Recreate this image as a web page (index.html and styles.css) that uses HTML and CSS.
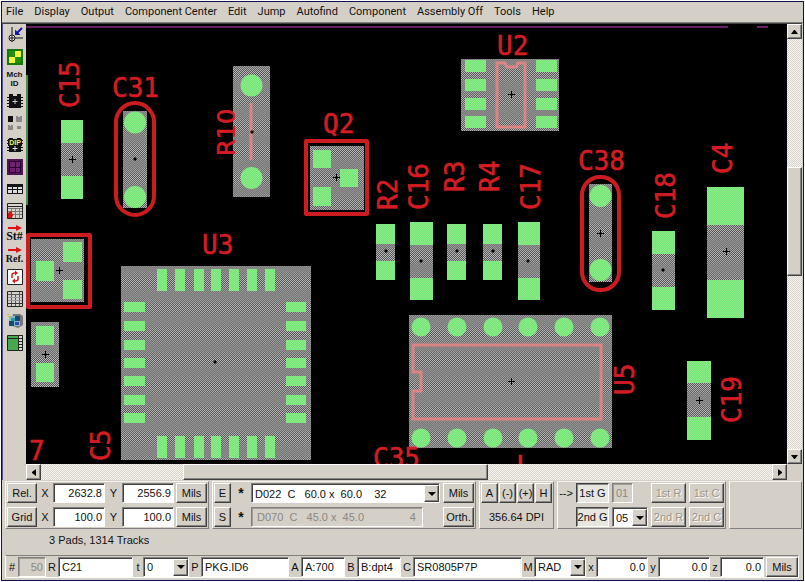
FILE: index.html
```html
<!DOCTYPE html>
<html lang="en">
<head>
<meta charset="utf-8">
<title>Board Viewer</title>
<link rel="stylesheet" href="styles.css">
</head>
<body>
<div class="window">
  <nav class="menu">
    <button>File</button><button>Display</button><button>Output</button><button>Component Center</button><button>Edit</button><button>Jump</button><button>Autofind</button><button>Component</button><button>Assembly Off</button><button>Tools</button><button>Help</button>
  </nav>

  <main class="work">
    <div class="tools">
      <button aria-label="Origin"><svg viewBox="0 0 16 16"><path d="M5 0v15M2 11h14" stroke="#111" fill="none"/><circle cx="5" cy="11" r="3" fill="#eee" stroke="#111"/><path d="M5 9v4M3 11h4" stroke="#111"/><path d="M15 1l-5 5" stroke="#1414b4" stroke-width="2"/><path d="M8 2.500v5.500h5.500z" fill="#1414b4"/></svg></button>
      <button aria-label="Layers"><svg viewBox="0 0 16 16"><path fill="#14780a" d="M0 0h16v16H0z"/><path fill="#f4f43c" d="M8 2h6v6H8zM2 8h6v6H2z"/><path fill="#209010" d="M2 2h6v6H2zM8 8h6v6H8z"/></svg></button>
      <button class="mch">Mch<br>ID</button>
      <button aria-label="Chip"><svg viewBox="0 0 16 16"><path fill="#111" d="M2 1h4v2h4V1h4v14H2z"/><path d="M0 4.500h16M0 7.500h16M0 10.500h16M0 13.500h16" stroke="#111"/><path d="M8 6v5M5.500 8.500h5" stroke="#ccc"/></svg></button>
      <button aria-label="Parts"><svg viewBox="0 0 16 16"><path fill="#111" d="M1 1h5v6H1z"/><path fill="#8a8a88" d="M9 1h2v1h2V1h2v6H9zM1 10h2v1h1v-1h2v5H1zM10 11h4v3h-4z"/></svg></button>
      <button aria-label="DIP"><svg viewBox="0 0 16 16"><path fill="#111" d="M2 1h4v1h4V1h4v14H2z"/><path d="M0 3.500h16M0 6.500h16M0 10.500h16M0 13.500h16" stroke="#111"/><path fill="#111" d="M1 2h14v7H1z"/><text x="8" y="8" class="dip">DIP</text><path d="M8 9v5M5.500 11.500h5" stroke="#ddd"/></svg></button>
      <button aria-label="Grid"><svg viewBox="0 0 16 16"><path fill="#581058" d="M0 0h16v16H0z"/><path d="M2.500 2.500h11v11h-11zM8.500 3v10M3 8.500h10" fill="#702070" stroke="#24002c"/></svg></button>
      <button aria-label="Row"><svg viewBox="0 0 16 16"><path fill="#151515" d="M0 3h16v10H0z"/><path fill="#ddd" d="M1 6h4v2H1zM6 6h4v2H6zM11 6h4v2h-4zM1 9h4v3H1zM6 9h4v3H6zM11 9h4v3h-4z"/></svg></button>
      <button aria-label="Edit table"><svg viewBox="0 0 16 16"><path fill="#d8d6d0" stroke="#222" d="M.5 .5h15v15H.5z"/><path stroke="#777" fill="none" d="M1 5.500h14M1 8.500h14M1 11.500h14M4.500 5v10M8.500 5v10M12.500 5v10"/><path stroke="#222" d="M1 3.500h14"/><path fill="#d01818" d="M1 10l3-2 2 4-1 3H1z"/></svg></button>
      <button class="serif"><svg class="arrow" viewBox="0 0 14 6"><path fill="#dc1418" d="M0 2h8V0l6 3-6 3V4H0z"/></svg>St#</button>
      <button class="serif small"><svg class="arrow" viewBox="0 0 14 6"><path fill="#dc1418" d="M0 2h8V0l6 3-6 3V4H0z"/></svg>Ref.</button>
      <button aria-label="Refresh"><svg viewBox="0 0 16 16"><path fill="#fff" stroke="#222" d="M.5 .5h15v15H.5z"/><path fill="none" stroke="#d01818" stroke-width="1.500" d="M5 9V6q0-2 3-2M11 7v3q0 2-3 2"/><path fill="#d01818" d="M8 1.500v5L11 4zM8 9.500v5L5 12z"/></svg></button>
      <button aria-label="Table"><svg viewBox="0 0 16 16"><path fill="#d4d2cc" stroke="#222" d="M.5 .5h15v15H.5z"/><path stroke="#555" fill="none" d="M1 3.500h14M4.500 1v14M8.500 4v11M12.500 1v14"/><path stroke="#999" d="M1 6.500h14M1 9.500h14"/><path stroke="#333" d="M1 12.500h14"/></svg></button>
      <button aria-label="Model"><svg viewBox="0 0 16 16"><path fill="#777" d="M3 12l8 3 5-3V3l-3-2H6z"/><path fill="#88b8c4" d="M2 3h11v10H2z"/><path fill="#184878" d="M2 8h5v5H2zM8 3h5v5H8z"/><path fill="#20a0a0" d="M4 5h4v3H4z"/><path fill="#2848b8" d="M8 9h4v3H8z"/><path fill="#c8c828" d="M0 1h3v1H0zM1 3h1v1H1z"/></svg></button>
      <button aria-label="Panel"><svg viewBox="0 0 16 16"><path fill="#48a850" stroke="#222" d="M.5 .5h15v15H.5z"/><path fill="#d4e0d0" stroke="#222" d="M11.500 .5h4v15h-4z"/><path stroke="#222" d="M1 3.500h14M12 6.500h3M12 9.500h3M12 12.500h3"/></svg></button>
    </div>

    <div class="view">
      <svg class="board" role="img" aria-label="Board layout">
        <defs>
          <pattern id="checker" width="2" height="2" patternUnits="userSpaceOnUse"><path fill="#484848" d="M0 0h2v2H0z"/><path fill="#c4c4c4" d="M0 0h1v1H0zM1 1h1v1H1z"/></pattern>
          <pattern id="green" width="2" height="2" patternUnits="userSpaceOnUse"><path fill="#74e474" d="M0 0h2v2H0z"/><path fill="#8cec8c" d="M0 0h1v1H0zM1 1h1v1H1z"/></pattern>
          <linearGradient id="band" gradientUnits="userSpaceOnUse" x1="0" y1="308" x2="0" y2="321" spreadMethod="reflect"><stop offset="0" stop-color="#848484" stop-opacity=".1"/><stop offset="1" stop-color="#848484" stop-opacity=".9"/></linearGradient>
          <path id="cross" d="M-3.500 0h7M0-3.500v7M-1 0h2" stroke="#000" fill="none"/>
          <path id="dot" d="M-2 0L0-2 2 0 0 2z" fill="#000"/>
          <path id="bodies" d="M61 120h22v79H61zM123 111h24v97h-24zM233 66h37v131h-37zM310 146h54v64h-54zM461 59h98v72h-98zM376 224h19v56h-19zM410 222h23v78h-23zM447 224h19v56h-19zM483 224h19v56h-19zM518 222h22v78h-22zM589 184h23v98h-23zM652 231h23v79h-23zM707 187h37v131h-37zM687 361h24v79h-24zM31 239h53v63H31zM31 322h28v65H31zM121 266h190v194H121zM409 315h203v133H409z"/>
        </defs>
        <g transform="translate(-26 -24)">
          <path class="sheet" d="M26 27h702M757 27h11"/>
          <path d="M26 75h2v130h-2z" fill="url(#green)" opacity=".6"/>
          <g shape-rendering="crispEdges">
            <use href="#bodies" fill="url(#checker)"/>
            <use href="#bodies" fill="url(#band)"/>
          </g>
          <g class="outline">
            <rect x="116" y="103" width="38" height="112" rx="19"/>
            <rect x="582" y="177" width="37" height="113" rx="18"/>
            <rect x="306" y="141" width="61" height="73"/>
            <rect x="28" y="235" width="62" height="72"/>
          </g>
          <g class="silk">
            <path d="M251 103v57"/>
            <path d="M497 127V63h8l2 4h9l2-4h7v64z"/>
            <path d="M413 345h188v74H413v-28h8v-19h-8z"/>
          </g>
          <g fill="url(#green)">
            <g shape-rendering="crispEdges">
              <path d="M61 120h22v23H61zM61 176h22v23H61z"/>
              <path d="M313 150h18v18h-18zM340 169h18v18h-18zM313 187h18v19h-18z"/>
              <path d="M465 60h21v12h-21zM465 79h21v12h-21zM465 98h21v12h-21zM465 116h21v12h-21zM536 60h21v12h-21zM536 79h21v12h-21zM536 98h21v12h-21zM536 116h21v12h-21z"/>
              <path d="M376 224h19v20h-19zM376 261h19v19h-19zM447 224h19v20h-19zM447 261h19v19h-19zM483 224h19v20h-19zM483 261h19v19h-19z"/>
              <path d="M410 222h23v23h-23zM410 278h23v22h-23zM518 222h22v23h-22zM518 278h22v22h-22z"/>
              <path d="M652 231h23v23h-23zM652 287h23v23h-23zM707 187h37v38h-37zM707 280h37v38h-37zM687 361h24v22h-24zM687 417h24v23h-24z"/>
              <path d="M63 242h19v20H63zM36 261h18v20H36zM63 280h19v19H63zM36 326h18v19H36zM36 363h18v19H36z"/>
              <path d="M157 269h10v22h-10zM175 269h10v22h-10zM194 269h10v22h-10zM211 269h10v22h-10zM229 269h10v22h-10zM247 269h10v22h-10zM265 269h10v22h-10z"/>
              <path d="M157 436h10v22h-10zM175 436h10v22h-10zM194 436h10v22h-10zM211 436h10v22h-10zM229 436h10v22h-10zM247 436h10v22h-10zM265 436h10v22h-10z"/>
              <path d="M124 302h21v10h-21zM124 321h21v10h-21zM124 340h21v10h-21zM124 358h21v10h-21zM124 376h21v10h-21zM124 395h21v10h-21zM124 413h21v10h-21z"/>
              <path d="M286 302h20v10h-20zM286 321h20v10h-20zM286 340h20v10h-20zM286 358h20v10h-20zM286 376h20v10h-20zM286 395h20v10h-20zM286 413h20v10h-20z"/>
            </g>
            <circle cx="135" cy="122.500" r="11"/><circle cx="135" cy="197" r="11"/>
            <circle cx="251.500" cy="85.500" r="11"/><circle cx="251.500" cy="178" r="11"/>
            <circle cx="600.500" cy="196" r="11"/><circle cx="600.500" cy="270" r="11"/>
            <circle cx="421" cy="327" r="9.500"/><circle cx="457" cy="327" r="9.500"/><circle cx="493" cy="327" r="9.500"/><circle cx="528" cy="327" r="9.500"/><circle cx="564" cy="327" r="9.500"/><circle cx="600" cy="327" r="9.500"/>
            <circle cx="421" cy="438" r="9.500"/><circle cx="457" cy="438" r="9.500"/><circle cx="493" cy="438" r="9.500"/><circle cx="528" cy="438" r="9.500"/><circle cx="564" cy="438" r="9.500"/><circle cx="600" cy="438" r="9.500"/>
          </g>
          <use href="#cross" x="72.500" y="159.500"/><use href="#dot" x="135" y="159"/><use href="#dot" x="252" y="132"/>
          <use href="#cross" x="336.500" y="177.500"/><use href="#cross" x="511.500" y="94.500"/>
          <use href="#dot" x="386" y="251"/><use href="#dot" x="421" y="261"/><use href="#dot" x="457" y="251"/><use href="#dot" x="493" y="251"/><use href="#dot" x="528" y="261"/>
          <use href="#cross" x="600.500" y="233.500"/><use href="#dot" x="663" y="270"/><use href="#cross" x="726.500" y="251.500"/><use href="#cross" x="699.500" y="400.500"/>
          <use href="#cross" x="59.500" y="270.500"/><use href="#cross" x="45.500" y="354.500"/><use href="#dot" x="215" y="362"/><use href="#cross" x="511.500" y="381.500"/>
          <g class="ref">
            <text x="112" y="97">C31</text><text x="323" y="133">Q2</text><text x="497" y="55">U2</text><text x="578" y="170">C38</text><text x="202" y="254">U3</text><text x="29" y="460">7</text><text x="373" y="467">C35</text>
            <text transform="translate(79 108) rotate(-90)">C15</text>
            <text class="wide" transform="translate(235 156) rotate(-90)">R10</text>
            <text transform="translate(397 210) rotate(-90)">R2</text>
            <text transform="translate(428 210) rotate(-90)">C16</text>
            <text transform="translate(464 192) rotate(-90)">R3</text>
            <text transform="translate(499 192) rotate(-90)">R4</text>
            <text transform="translate(540 210) rotate(-90)">C17</text>
            <text transform="translate(675 219) rotate(-90)">C18</text>
            <text transform="translate(732 174) rotate(-90)">C4</text>
            <text transform="translate(741 423) rotate(-90)">C19</text>
            <text transform="translate(634 395) rotate(-90)">U5</text>
            <text transform="translate(110 461) rotate(-90)">C5</text>
            <path d="M519 455h3v12h-3z"/>
          </g>
        </g>
      </svg>
    </div>

    <div class="scroll vertical">
      <button aria-label="Scroll up"><svg viewBox="0 0 7 4"><path d="M0 4h7L4 0H3z"/></svg></button>
      <span class="before"></span><span class="thumb"></span><span class="after"></span>
      <button aria-label="Scroll down"><svg viewBox="0 0 7 4"><path d="M0 0h7L4 4H3z"/></svg></button>
    </div>
    <div class="scroll horizontal">
      <button aria-label="Scroll left"><svg class="side" viewBox="0 0 4 7"><path d="M4 0v7L0 4V3z"/></svg></button>
      <span class="before"></span><span class="thumb"></span><span class="after"></span>
      <button aria-label="Scroll right"><svg class="side" viewBox="0 0 4 7"><path d="M0 0v7l4-3V3z"/></svg></button>
    </div>
  </main>

  <footer class="panel">
    <div class="groups">
      <div class="group coords">
        <button class="btn">Rel.</button><label for="x1">X</label><input id="x1" class="num" value="2632.8"><label for="y1">Y</label><input id="y1" class="num" value="2556.9"><button class="btn">Mils</button>
        <button class="btn">Grid</button><label for="x2">X</label><input id="x2" class="num" value="100.0"><label for="y2">Y</label><input id="y2" class="num" value="100.0"><button class="btn">Mils</button>
      </div>
      <div class="group codes">
        <button class="btn">E</button><label for="d1" class="star">*</label>
        <span class="combo"><select id="d1"><option>D022&nbsp; C &nbsp; 60.0 x &nbsp;60.0 &nbsp; &nbsp;32</option></select><i></i></span>
        <button class="btn">Mils</button>
        <button class="btn">S</button><label for="d2" class="star">*</label>
        <span class="flat"><input id="d2" disabled value="D070  C   45.0 x  45.0               4"></span>
        <button class="btn">Orth.</button>
      </div>
      <div class="group zoom">
        <button class="btn">A</button><button class="btn">(-)</button><button class="btn">(+)</button><button class="btn">H</button>
        <output>356.64 DPI</output>
      </div>
      <div class="group grids">
        <span class="to">--&gt;</span><button class="btn down">1st G</button><span class="cell"><input aria-label="First grid" disabled value="01"></span><button class="btn" disabled>1st R</button><button class="btn" disabled>1st C</button>
        <span></span><button class="btn down">2nd G</button><span class="combo"><select aria-label="Second grid"><option>05</option></select><i></i></span><button class="btn" disabled>2nd R</button><button class="btn" disabled>2nd C</button>
      </div>
      <div class="group rest"></div>
    </div>
    <p class="status">3 Pads, 1314 Tracks</p>
    <div class="fields">
      <label for="f0">#</label><input id="f0" class="num w28" disabled value="50">
      <label for="f1">R</label><input id="f1" class="w75" value="C21">
      <label for="f2" class="slim">t</label><span class="combo w46"><select id="f2"><option>0</option></select><i></i></span>
      <label for="f3">P</label><input id="f3" class="w88" value="PKG.ID6">
      <label for="f4">A</label><input id="f4" class="w44" value="A:700">
      <label for="f5">B</label><input id="f5" class="w44" value="B:dpt4">
      <label for="f6">C</label><input id="f6" class="grow" value="SR0805P7P">
      <label for="f7">M</label><span class="combo w52"><select id="f7"><option>RAD</option></select><i></i></span>
      <label for="f8" class="slim">x</label><input id="f8" class="num w52" value="0.0">
      <label for="f9" class="slim">y</label><input id="f9" class="num w52" value="0.0">
      <label for="f10" class="slim">z</label><input id="f10" class="num w44" value="0.0">
      <button class="btn">Mils</button>
    </div>
  </footer>
</div>
</body>
</html>
```
FILE: styles.css
```css
:root {
  --face: #d4d0c8;
  --mid: #808080;
  --dark: #404040;
}

* { box-sizing: border-box; }

body {
  margin: 0;
  padding: 1px;
  background: #fff;
  font: 11px/14px "Liberation Sans", Arial, sans-serif;
  color: #111;
}

button, input, select {
  font: inherit;
  color: inherit;
  margin: 0;
  padding: 0;
  border-radius: 0;
}

.window {
  display: flex;
  flex-direction: column;
  min-height: calc(100vh - 2px);
  background: var(--face);
  border: 1px solid #10104c;
}

/* Menu */
.menu {
  display: flex;
  gap: 11px;
  height: 21px;
  padding: 0 4px;
  font-family: Roboto, "Liberation Sans", sans-serif;
  border-bottom: 1px solid var(--mid);
}

.menu button {
  background: none;
  border: 0;
  white-space: nowrap;
}

/* Work area */
.work {
  flex: 1;
  display: grid;
  grid-template-columns: 23px 1fr 15px;
  grid-template-rows: 1fr 16px;
  border-top: 1px solid var(--dark);
  border-left: 1px solid #50508c;
  margin-right: 1px;
}

.tools {
  grid-row: 1 / 3;
  display: flex;
  flex-direction: column;
  align-items: center;
}

.tools button {
  height: 22px;
  width: 22px;
  flex: none;
  background: none;
  border: 0;
  display: flex;
  flex-direction: column;
  align-items: center;
  justify-content: center;
  line-height: 9px;
}

.tools svg { width: 16px; height: 16px; display: block; }
.tools .arrow { width: 14px; height: 6px; }
.tools .mch { display: block; font-weight: bold; font-size: 8px; }
.tools .serif { font: bold 12px/11px "Liberation Serif", serif; }
.tools .small { font-size: 10px; }
.dip { font: bold 7px "Liberation Sans", sans-serif; fill: #f0f060; text-anchor: middle; }

.view { position: relative; background: #000; overflow: hidden; }
.board { position: absolute; inset: 0; width: 100%; height: 100%; }

.sheet { stroke: #642064; stroke-width: 2; }
.outline { fill: none; stroke: #cc1c20; stroke-width: 4; stroke-linejoin: round; }
.silk { fill: none; stroke: #dc8484; stroke-width: 3; }
.ref { fill: #d41c22; stroke: #d41c22; stroke-width: .6; font: 26px "DejaVu Sans Mono", monospace; }
.ref .wide { font: 24px "DejaVu Sans", sans-serif; }

/* Scroll bars */
.scroll {
  display: flex;
  background: repeating-conic-gradient(#d8d4cc 0 25%, #f6f4f0 0 50%) 0 0 / 2px 2px;
}

.vertical { flex-direction: column; }
.horizontal { grid-column: 2; }

.scroll button, .thumb, .btn, .combo i {
  background: var(--face);
  border: 1px solid;
  border-color: #fff var(--dark) var(--dark) #fff;
  box-shadow: inset -1px -1px #868686;
}

.scroll button {
  flex: 0 0 15px;
  display: grid;
  place-items: center;
}

.scroll svg { width: 7px; height: 4px; }
.scroll .side { width: 4px; height: 7px; }
.vertical .before { flex: 128; }
.vertical .thumb { flex: 108; }
.vertical .after { flex: 173; }
.horizontal .before { flex: 142; }
.horizontal .thumb { flex: 304; }
.horizontal .after { flex: 284; }

/* Lower panel */
.panel { padding: 1px 1px 2px 3px; }
.groups { display: flex; gap: 3px; }

.group {
  display: grid;
  gap: 4px 2px;
  grid-auto-rows: 20px;
  align-items: center;
  padding: 1px;
  border: 1px solid;
  border-color: #f4f2ee var(--mid) var(--mid) #fff;
}

.coords { grid-template-columns: 30px 12px 52px 13px 52px 31px; }
.codes { grid-template-columns: 17px 14px 189px 31px; column-gap: 3px; }
.zoom { grid-template-columns: repeat(4, 17px); column-gap: 1px; }
.grids { grid-template-columns: 14px 33px 36px 35px 35px; column-gap: 3px; }
.rest { flex: 1; }

.group label, .to { text-align: center; }
.group .star { font-size: 14px; font-weight: bold; }
.zoom output { grid-column: 1 / -1; text-align: center; }

.btn {
  height: 20px;
  width: 100%;
  white-space: nowrap;
  text-align: center;
}

.btn:disabled { color: #9a968e; text-shadow: 1px 1px #fff; }

.down {
  background: #e8e6e0;
  border-color: var(--dark) #fff #fff var(--dark);
  box-shadow: inset 1px 1px #868686;
}

input, .combo {
  width: 100%;
  min-width: 0;
  height: 20px;
  background: #fff;
  border: 1px solid;
  border-color: var(--mid) #fff #fff var(--mid);
  box-shadow: inset 1px 1px var(--dark);
}

input { padding: 0 2px 0 3px; }
.num { text-align: right; }

input:disabled {
  background: var(--face);
  color: #8c8880;
  opacity: 1;
  box-shadow: inset 1px 1px #a09c94;
}

.flat { padding-right: 17px; }
.flat input { white-space: pre; padding-left: 5px; }
.cell { padding-right: 15px; }

.combo {
  display: grid;
  grid-template-columns: 1fr 15px;
  padding: 1px 0 0 1px;
}

.combo select {
  grid-area: 1 / 1 / 2 / 3;
  appearance: none;
  width: 100%;
  border: 0;
  background: none;
  padding: 0 2px;
}

.combo i {
  grid-area: 1 / 2;
  display: grid;
  place-items: center;
  pointer-events: none;
}

.combo i::before {
  content: "";
  border: 4px solid transparent;
  border-top-color: #000;
  border-bottom: 0;
}

.status { margin: 0; padding: 4px 0 8px 44px; }

.fields {
  display: flex;
  align-items: center;
  height: 23px;
  border: 1px solid;
  border-color: var(--mid) #fff #fff #fff;
  margin-right: 3px;
}

.fields label { flex: 0 0 12px; text-align: center; }
.fields .slim { flex-basis: 10px; }
.fields input, .fields .combo { flex: none; }
.fields .w28 { width: 28px; }
.fields .w44 { width: 44px; }
.fields .w46 { width: 46px; }
.fields .w52 { width: 52px; }
.fields .w75 { width: 75px; }
.fields .w88 { width: 88px; }
.fields .grow { flex: 1; }
.fields .btn { flex: 0 0 32px; margin-left: 2px; }
```
